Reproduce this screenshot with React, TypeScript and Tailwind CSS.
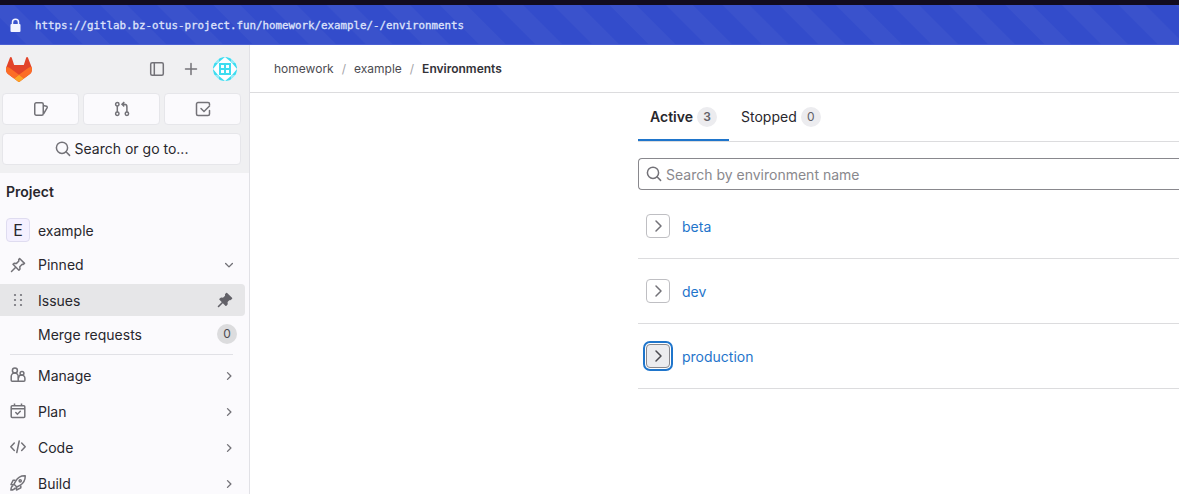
import React from 'react';

type IconProps = { className?: string; children: React.ReactNode; size?: number };

function Icon({ className = 'text-[#737278]', children, size = 16 }: IconProps) {
  return (
    <svg
      width={size}
      height={size}
      viewBox="0 0 16 16"
      fill="none"
      stroke="currentColor"
      strokeWidth="1.5"
      className={`shrink-0 ${className}`}
    >
      {children}
    </svg>
  );
}

function Tanuki() {
  return (
    <svg width="26" height="25" viewBox="0 0 25 24" className="shrink-0">
      <path d="M24.507 9.5l-.034-.09L21.082.562a.896.896 0 0 0-1.694.091l-2.29 7.01H7.825L5.535.653a.898.898 0 0 0-1.694-.09L.451 9.411.416 9.5a6.297 6.297 0 0 0 2.09 7.278l.012.01.03.022 5.16 3.867 2.56 1.935 1.554 1.176a1.051 1.051 0 0 0 1.268 0l1.555-1.176 2.56-1.935 5.197-3.89.014-.01A6.297 6.297 0 0 0 24.507 9.5z" fill="#E24329" />
      <path d="M24.507 9.5l-.034-.09a11.44 11.44 0 0 0-4.56 2.051l-7.447 5.632 4.742 3.584 5.197-3.89.014-.01A6.297 6.297 0 0 0 24.507 9.5z" fill="#FC6D26" />
      <path d="M7.707 20.677l2.56 1.935 1.555 1.176a1.051 1.051 0 0 0 1.268 0l1.555-1.176 2.56-1.935-4.743-3.584-4.755 3.584z" fill="#FCA326" />
      <path d="M5.01 11.461a11.43 11.43 0 0 0-4.56-2.05L.416 9.5a6.297 6.297 0 0 0 2.09 7.278l.012.01.03.022 5.16 3.867 4.745-3.584-7.444-5.632z" fill="#FC6D26" />
    </svg>
  );
}

function Identicon() {
  return (
    <svg width="24" height="24" viewBox="0 0 24 24" className="shrink-0">
      <defs>
        <clipPath id="avatar">
          <circle cx="12" cy="12" r="12" />
        </clipPath>
      </defs>
      <g clipPath="url(#avatar)">
        <path fill="#fdfdff" d="M0 0h24v24H0z" />
        <g fill="#3ddcf0">
          <path d="M6 6h12v12H6z" />
          <path d="M6 0h6L6 5zM18 0h-6l6 5zM6 24h6l-6-5zM18 24h-6l6-5z" />
          <path d="M0 6v6l5-6zM24 6v6l-5-6zM0 18v-6l5 6zM24 18v-6l-5 6z" />
          <path d="M1 6 6 1v5zM23 6l-5-5v5zM1 18l5 5v-5zM23 18l-5 5v-5z" opacity="0.55" />
        </g>
        <path fill="#fdfdff" d="M8 8h3v3H8zM13 8h3v3h-3zM8 13h3v3H8zM13 13h3v3h-3z" />
      </g>
    </svg>
  );
}

const SearchIcon = ({ className }: { className?: string }) => (
  <Icon className={className ?? 'text-[#737278]'}>
    <circle cx="7" cy="6.800" r="5.600" />
    <path d="m11 10.800 3.600 3.600" strokeLinecap="round" />
  </Icon>
);

const Chevron = ({ className, size = 16 }: { className?: string; size?: number }) => (
  <Icon className={className} size={size}>
    <path d="m6 3 5 5-5 5" strokeLinecap="round" strokeLinejoin="round" />
  </Icon>
);

const SmallChevron = ({ className }: { className: string }) => (
  <Icon className={className} size={12}>
    <path d="m6 3.500 4.500 4.500L6 12.500" strokeLinecap="round" strokeLinejoin="round" strokeWidth="1.800" />
  </Icon>
);

const pinPath =
  'm9.600 1.500 4.900 4.900-1.300 1-1-.1-2.400 2.400.2 2.300-1.100 1.200-5.900-5.900 1.200-1.100 2.300.2 2.400-2.400-.2-1.200z';

const PinOutline = () => (
  <Icon>
    <path d={pinPath} strokeLinejoin="round" />
    <path d="m5.500 10.500-4 4" strokeLinecap="round" />
  </Icon>
);

const PinSolid = () => (
  <Icon className="text-[#626168]">
    <path d={pinPath} fill="currentColor" strokeLinejoin="round" />
    <path d="m5.500 10.500-4 4" strokeLinecap="round" strokeWidth="1.600" />
  </Icon>
);

const IssuesIcon = () => (
  <Icon>
    <rect x="1.750" y="1.750" width="8.500" height="12.500" rx="1.500" />
    <path d="M10.250 4.500 13.500 5.300a1 1 0 0 1 .7 1.300l-3.600 6.200" strokeLinejoin="round" />
  </Icon>
);

const MergeIcon = () => (
  <Icon>
    <circle cx="3.300" cy="3.200" r="1.700" />
    <circle cx="3.300" cy="12.800" r="1.700" />
    <circle cx="12.900" cy="12.800" r="1.700" />
    <path d="M3.300 5v6M12.900 11V5.700a2.500 2.500 0 0 0-2.500-2.500H8.500M10.300 1 8 3.200l2.300 2.200" />
  </Icon>
);

const TodoIcon = () => (
  <Icon>
    <path d="M14.500 4V3a1.500 1.500 0 0 0-1.500-1.500H3A1.500 1.500 0 0 0 1.500 3v10A1.500 1.500 0 0 0 3 14.500h10a1.500 1.500 0 0 0 1.500-1.500V9.500" strokeLinecap="round" />
    <path d="m6 7.500 3 3 5.500-5.500" strokeLinecap="round" />
  </Icon>
);

const ManageIcon = () => (
  <Icon>
    <circle cx="4.900" cy="3.500" r="2.500" />
    <path d="M8.200 14.300H2.200a1 1 0 0 1-1-1V9.500a3.500 3.500 0 0 1 7 0z" />
    <circle cx="12" cy="6.300" r="1.900" />
    <path d="M8.300 14.300h5.600a1 1 0 0 0 1-1v-2a3.200 3.200 0 0 0-6.400 0" />
  </Icon>
);

const PlanIcon = () => (
  <Icon>
    <rect x="1.200" y="2.800" width="13.600" height="11.700" rx="1" />
    <path d="M1.200 5.800h13.600M4.500 0.500v2.300M11.500 0.500v2.300" />
    <path d="m5.800 9.500 1.600 1.700 2.900-2.900" strokeLinecap="round" />
  </Icon>
);

const CodeIcon = () => (
  <Icon>
    <path d="M4.300 4 .8 7.700l3.500 3.700M11.700 4l3.500 3.700-3.500 3.700M9.200 2 6.800 13.500" strokeLinecap="round" strokeLinejoin="round" />
  </Icon>
);

const BuildIcon = () => (
  <Icon>
    <path d="M15.200.8c-4-.2-7.400 1.600-9.500 5.300L4 9.200 6.800 12l3.100-1.700c3.700-2.100 5.500-5.500 5.300-9.500z" strokeLinejoin="round" />
    <circle cx="10.200" cy="5.800" r="1.100" />
    <path d="M5.500 5.200H3.200L1 9.500l3 .2M10.800 10.500v2.300L6.500 15l-.2-3M3.300 10.500C1.500 11 1 12.500.9 15.100c1.500 0 3.700-.5 4.300-2.300" strokeLinejoin="round" />
  </Icon>
);

const sections = [
  { label: 'Manage', icon: <ManageIcon /> },
  { label: 'Plan', icon: <PlanIcon /> },
  { label: 'Code', icon: <CodeIcon /> },
  { label: 'Build', icon: <BuildIcon /> },
];

const environments = [
  { name: 'beta', focused: false },
  { name: 'dev', focused: false },
  { name: 'production', focused: true },
];

function AddressBar() {
  return (
    <div className="flex h-10 shrink-0 items-center border-b border-[#4a5fd2] bg-[#334ccb] bg-[repeating-linear-gradient(45deg,#334ccb_0px,#334ccb_18px,#3a52cc_19px,#3a52cc_37px,#334ccb_38px,#334ccb_40px)] pl-[10px]">
      <svg width="11" height="15" viewBox="0 0 11 15" className="mt-px shrink-0 text-[#f2f3ff]">
        <path d="M2.500 7V4.300a3 3 0 0 1 6 0V7" fill="none" stroke="currentColor" strokeWidth="1.500" />
        <rect x="0.500" y="6" width="10" height="8" rx="1" fill="currentColor" />
      </svg>
      <span className="ml-[14px] pt-1 font-['DejaVu_Sans_Mono',monospace] text-[10.8px] leading-none whitespace-nowrap text-[#dfe3fb] [-webkit-text-stroke:0.3px_#dfe3fb]">
        https://gitlab.bz-otus-project.fun/homework/example/-/environments
      </span>
    </div>
  );
}

function Sidebar() {
  const tile = 'flex h-8 flex-1 items-center justify-center rounded-[4px] border border-[#e6e6ea] bg-[#fbfafd]';
  return (
    <aside className="flex w-[250px] shrink-0 flex-col overflow-hidden border-r border-[#e1e1e6] bg-[#fbfafd]">
      <div className="h-32 shrink-0 bg-[#f0f0f2] pr-2 pl-0.5">
        <div className="flex h-12 items-center pr-1 pl-[3.500px]">
          <Tanuki />
          <div className="ml-auto flex items-center gap-[18px]">
            <Icon>
              <rect x="1.700" y="1.700" width="12.600" height="12.600" rx="1.500" />
              <path d="M5.300 2v12" />
            </Icon>
            <Icon>
              <path d="M8 2.500v11M2.500 8h11" strokeLinecap="round" />
            </Icon>
            <div className="-ml-1">
              <Identicon />
            </div>
          </div>
        </div>
        <div className="flex gap-1">
          <div className={tile}><IssuesIcon /></div>
          <div className={tile}><MergeIcon /></div>
          <div className={tile}><TodoIcon /></div>
        </div>
        <div className="mt-2 flex h-8 items-center justify-center gap-1 rounded-[4px] border border-[#e6e6ea] bg-[#fbfafd]">
          <SearchIcon />
          <span>Search or go to...</span>
        </div>
      </div>

      <div className="mt-[9px] flex h-5 shrink-0 items-center pl-[6px] font-semibold">Project</div>
      <div className="mt-4 flex h-6 shrink-0 items-center pl-[6px]">
        <div className="flex size-6 items-center justify-center rounded-[4px] border border-[#dfdcf0] bg-[#f4f0ff] text-base">E</div>
        <span className="ml-2 pt-0.5">example</span>
      </div>
      <div className="mt-[7px] flex h-8 shrink-0 items-center pr-3 pl-[10px]">
        <PinOutline />
        <span className="ml-3">Pinned</span>
        <SmallChevron className="ml-auto mr-0.5 rotate-90 text-[#737278]" />
      </div>
      <div className="mt-[3px] mr-1 flex h-8 shrink-0 items-center rounded-r-[4px] bg-[#e6e6e8] pr-3 pl-[10px]">
        <svg width="16" height="16" viewBox="0 0 16 16" fill="#737278" className="shrink-0">
          <circle cx="5" cy="3" r="1.100" />
          <circle cx="11" cy="3" r="1.100" />
          <circle cx="5" cy="8" r="1.100" />
          <circle cx="11" cy="8" r="1.100" />
          <circle cx="5" cy="13" r="1.100" />
          <circle cx="11" cy="13" r="1.100" />
        </svg>
        <span className="ml-3 pt-0.5">Issues</span>
        <div className="ml-auto"><PinSolid /></div>
      </div>
      <div className="mt-0.5 flex h-8 shrink-0 items-center pr-3 pl-[38px]">
        <span className="pt-0.5">Merge requests</span>
        <span className="ml-auto flex size-5 items-center justify-center rounded-full bg-[#dcdcde] text-xs text-[#4c4b51]">0</span>
      </div>
      <div className="mt-1 mr-4 ml-[10px] h-px shrink-0 bg-[#e1e1e6]" />
      <div className="mt-1 flex flex-col gap-1">
        {sections.map(({ label, icon }) => (
          <div key={label} className="flex h-8 shrink-0 items-center pr-3 pl-[10px]">
            {icon}
            <span className="ml-3 pt-0.5">{label}</span>
            <SmallChevron className="mt-0.5 mr-0.5 ml-auto text-[#737278]" />
          </div>
        ))}
      </div>
    </aside>
  );
}

function Main() {
  return (
    <main className="flex min-w-0 flex-1 flex-col bg-white">
      <nav className="flex h-12 shrink-0 items-center border-b border-[#dcdcde] pl-6 text-[12px] text-[#4c4b51]">
        <span>homework</span>
        <span className="mx-2 text-[#a4a3a8]">/</span>
        <span>example</span>
        <span className="mx-2 text-[#a4a3a8]">/</span>
        <span className="font-semibold text-[#333238]">Environments</span>
      </nav>
      <div className="ml-[388px]">
        <div className="flex h-[49px] border-b border-[#dcdcde]">
          <div className="flex h-12 w-[91px] items-center border-b-2 border-[#1f75cb] pt-0.5 pl-3 font-semibold">
            Active
            <span className="ml-1 flex size-5 items-center justify-center rounded-full bg-[#ececef] text-xs text-[#626168]">3</span>
          </div>
          <div className="flex h-12 items-center pl-3">
            Stopped
            <span className="ml-1 flex size-5 items-center justify-center rounded-full bg-[#ececef] text-xs text-[#626168]">0</span>
          </div>
        </div>
        <div className="mt-4 flex h-8 items-center rounded-l-[4px] border border-r-0 border-[#89888d] pl-[7px]">
          <SearchIcon />
          <span className="ml-1 pt-0.5 text-[#89888d]">Search by environment name</span>
        </div>
        <div className="mt-1">
          {environments.map(({ name, focused }) => (
            <div key={name} className="flex h-[65px] items-center border-b border-[#dcdcde] pl-2">
              <button
                className={
                  focused
                    ? 'flex size-6 items-center justify-center rounded-[4px] border border-[#89888d] bg-[#ececef] shadow-[0_0_0_1px_#fff,0_0_0_3px_#1f75cb]'
                    : 'flex size-6 items-center justify-center rounded-[4px] border border-[#bfbfc3] bg-white'
                }
              >
                <Chevron className={focused ? 'text-[#4c4b51]' : 'text-[#737278]'} />
              </button>
              <span className="ml-3 pt-0.5 text-[#1f75cb]">{name}</span>
            </div>
          ))}
        </div>
      </div>
    </main>
  );
}

export default function App() {
  return (
    <div className="flex h-[494px] w-full flex-col overflow-hidden bg-white font-['Inter',sans-serif] text-[14px] leading-5 text-[#28272d]">
      <div className="h-[5px] shrink-0 bg-[#120c20]" />
      <AddressBar />
      <div className="flex min-h-0 flex-1">
        <Sidebar />
        <Main />
      </div>
    </div>
  );
}
